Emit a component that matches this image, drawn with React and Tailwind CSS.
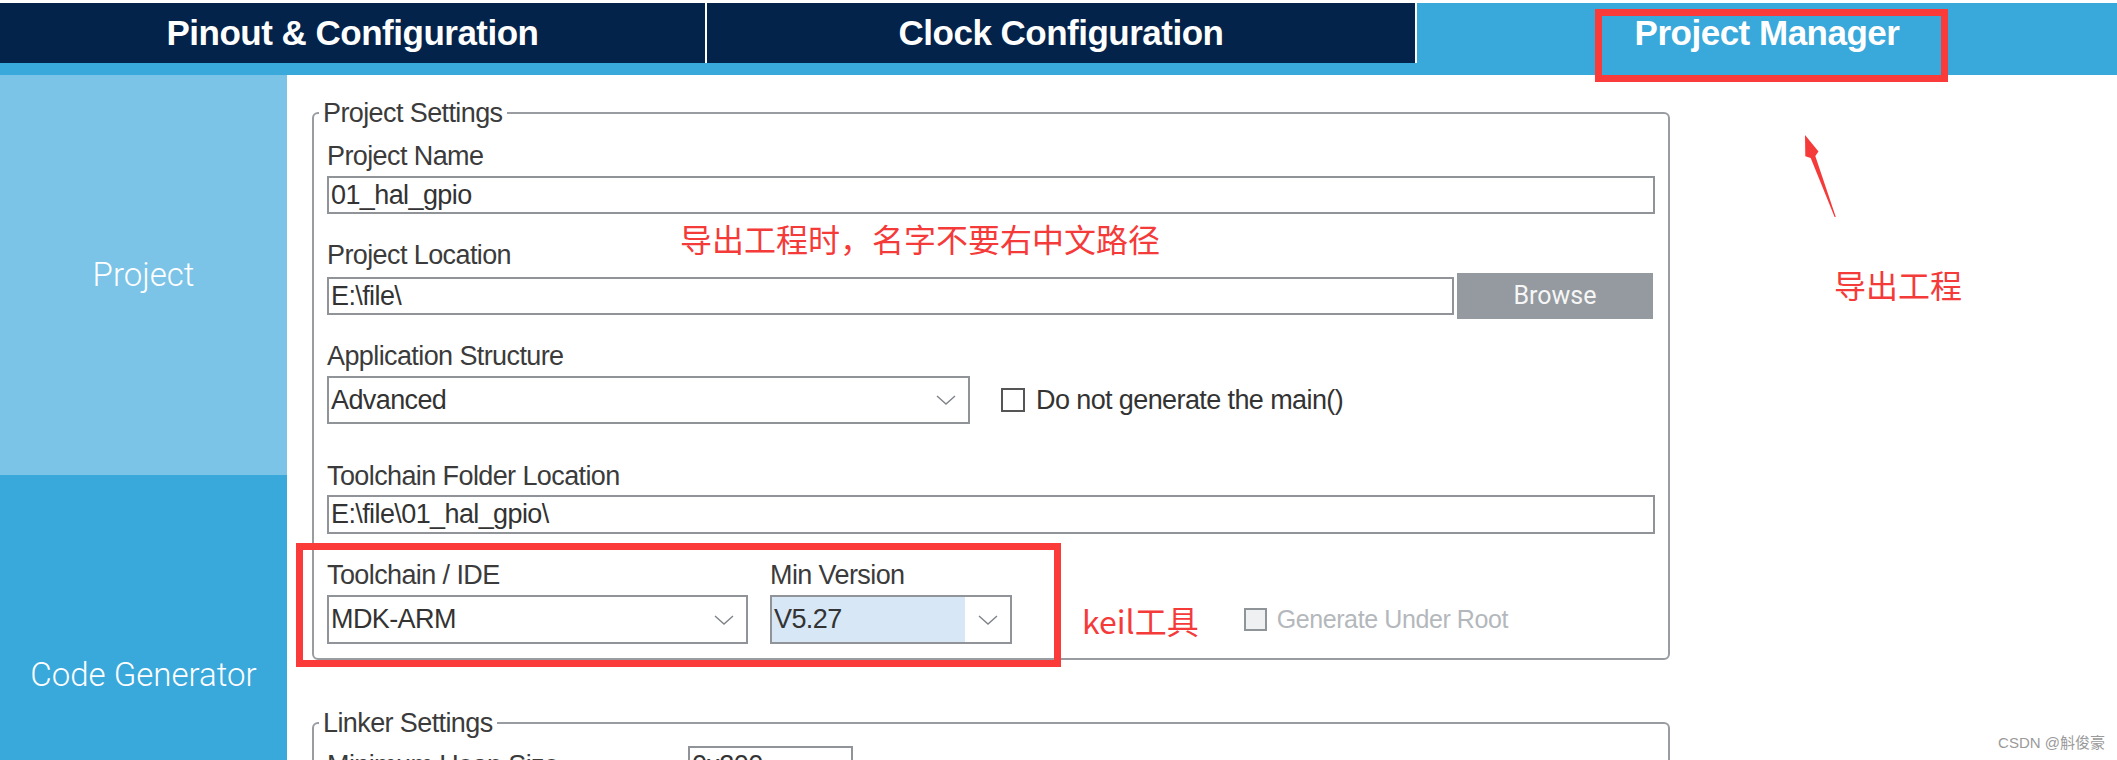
import React from "react";

const label = "block text-[27px] leading-[32px] tracking-[-0.6px] text-[#3b3b3b]";
const field = "flex items-center border-2 border-[#909499] bg-white pl-[2px] text-[27px] tracking-[-0.6px] text-[#333]";

const Chevron = () => (
    <svg width="20" height="10" viewBox="0 0 20 10" fill="none">
        <path d="M1 1 L10 9 L19 1" stroke="#7f8388" strokeWidth="1.4" />
    </svg>
);

const SelectBox = ({ value, className = "", highlight = false }) => (
    <div className={`flex border-2 border-[#909499] bg-white ${className}`}>
        <div
            className={`flex flex-1 items-center pl-[2px] text-[27px] tracking-[-0.6px] text-[#333] ${
                highlight ? "bg-[#d7e7f5]" : ""
            }`}
        >
            {value}
        </div>
        <div className="flex w-[45px] items-center justify-center">
            <Chevron />
        </div>
    </div>
);

const App = () => {
    return (
        <div className="relative h-[760px] w-[2117px] overflow-hidden bg-white font-['Liberation_Sans',Arial,sans-serif]">
            {/* tabs */}
            <div className="relative z-10 flex h-[63px] gap-[2px] bg-white pt-[3px] text-[35px] font-bold tracking-[-0.5px] text-white">
                <div className="flex w-[705px] items-center justify-center bg-[#03234b]">
                    Pinout &amp; Configuration
                </div>
                <div className="flex w-[708px] items-center justify-center bg-[#03234b]">
                    Clock Configuration
                </div>
                <div className="relative flex flex-1 items-center justify-center bg-[#39a8db]">
                    Project Manager
                    <div className="absolute left-[178px] top-[6px] h-[73px] w-[353px] border-[7px] border-[#fb3a3a]" />
                </div>
            </div>
            <div className="h-[12px] bg-[#39a8db]" />

            <div className="flex">
                {/* sidebar */}
                <div className="w-[287px] shrink-0 font-['Roboto',sans-serif] text-[33px] font-light text-white">
                    <div className="flex h-[400px] items-center justify-center bg-[#7bc4e8]">Project</div>
                    <div className="flex h-[400px] items-center justify-center bg-[#39a8db]">Code Generator</div>
                </div>

                {/* main */}
                <div className="relative flex-1 pl-[25px]">
                    <fieldset className="mt-[22px] w-[1358px] rounded-[6px] border-2 border-[#999da2] px-[13px] pb-[14px]">
                        <legend className="-ml-[8px] px-[4px] text-[27px] leading-[32px] tracking-[-0.6px] text-[#3b3b3b]">
                            Project Settings
                        </legend>

                        <div className="pt-[11px]">
                            <span className={label}>Project Name</span>
                            <div className={`${field} mt-[4px] h-[38px]`}>01_hal_gpio</div>
                        </div>

                        <span className={`${label} mt-[25px]`}>Project Location</span>
                        <div className="mt-[2px] flex h-[46px] items-center gap-[3px] pr-[2px]">
                            <div className={`${field} h-[38px] flex-1`}>E:\file\</div>
                            <button className="flex h-[46px] w-[196px] items-center justify-center bg-[#949a9f] font-['Roboto',sans-serif] text-[25px] text-[#f6f6f6]">
                                Browse
                            </button>
                        </div>

                        <span className={`${label} mt-[21px]`}>Application Structure</span>
                        <div className="mt-[4px] flex h-[48px] items-center">
                            <SelectBox value="Advanced" className="h-[48px] w-[643px]" />
                            <div className="ml-[31px] h-[24px] w-[24px] border-2 border-[#555]" />
                            <span className="ml-[11px] text-[27px] tracking-[-0.6px] text-[#333]">
                                Do not generate the main()
                            </span>
                        </div>

                        <span className={`${label} mt-[36px]`}>Toolchain Folder Location</span>
                        <div className={`${field} mt-[3px] h-[39px]`}>E:\file\01_hal_gpio\</div>

                        <div className="relative mt-[25px] flex">
                            <div className="w-[421px]">
                                <span className={label}>Toolchain / IDE</span>
                                <SelectBox value="MDK-ARM" className="mt-[4px] h-[49px]" />
                            </div>
                            <div className="ml-[22px] w-[242px]">
                                <span className={label}>Min Version</span>
                                <SelectBox value="V5.27" highlight className="mt-[4px] h-[49px]" />
                            </div>
                            <div className="mt-[36px] flex h-[49px] items-center">
                                <span className="ml-[70px] font-['Noto_Sans_CJK_SC',sans-serif] text-[32px] leading-[32px] text-[#f53a3a]">
                                    keil工具
                                </span>
                                <div className="ml-[45px] h-[23px] w-[23px] border-2 border-[#8f9499] bg-[#eef0f2]" />
                                <span className="ml-[10px] text-[25px] tracking-[-0.4px] text-[#b4b8bc]">
                                    Generate Under Root
                                </span>
                            </div>
                            <div className="absolute -left-[31px] -top-[16px] h-[124px] w-[765px] border-[7px] border-[#fb3a3a]" />
                        </div>
                    </fieldset>

                    <fieldset className="mt-[47px] h-[200px] w-[1358px] rounded-[6px] border-2 border-[#999da2] px-[13px]">
                        <legend className="-ml-[8px] px-[4px] text-[27px] leading-[32px] tracking-[-0.6px] text-[#3b3b3b]">
                            Linker Settings
                        </legend>
                        <div className="flex h-[38px] items-center pt-[0px] mt-[7px]">
                            <span className="w-[361px] text-[27px] tracking-[-0.6px] text-[#3b3b3b]">
                                Minimum Heap Size
                            </span>
                            <div className={`${field} h-[38px] w-[165px]`}>0x200</div>
                        </div>
                    </fieldset>

                    {/* annotations */}
                    <span className="absolute left-[393px] top-[147px] font-['Noto_Sans_CJK_SC',sans-serif] text-[32px] leading-[32px] text-[#f53a3a]">
                        导出工程时，名字不要右中文路径
                    </span>
                    <svg
                        className="absolute left-[1513px] top-[55px]"
                        width="45"
                        height="95"
                        viewBox="1800 130 45 95"
                    >
                        <polygon
                            points="1805,135 1818.5,151.4 1815.3,156.1 1835.8,217 1834.6,217 1810.7,157.9 1805.3,156.2"
                            fill="#f53a3a"
                        />
                    </svg>
                    <span className="absolute left-[1547px] top-[193px] font-['Noto_Sans_CJK_SC',sans-serif] text-[32px] leading-[32px] text-[#f53a3a]">
                        导出工程
                    </span>
                </div>
            </div>

            <span className="absolute bottom-[6px] right-[12px] font-['Liberation_Sans','Noto_Sans_CJK_SC',sans-serif] text-[15px] text-[#9a9a9a]">
                CSDN @斛俊豪
            </span>
        </div>
    );
};

export default App;
